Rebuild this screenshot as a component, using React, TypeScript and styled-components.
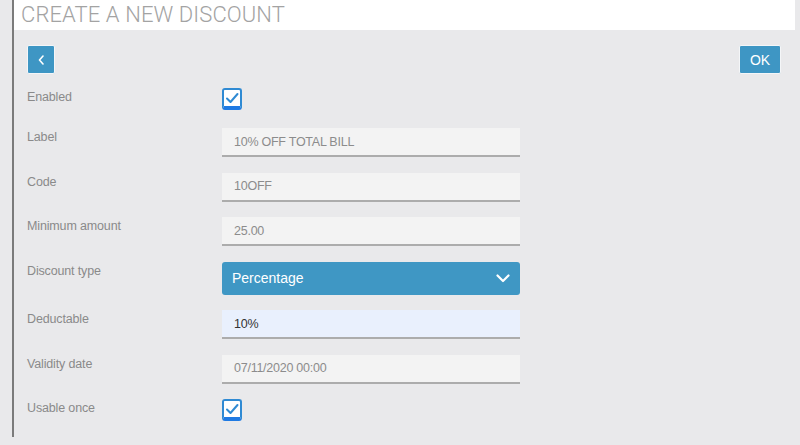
import React from "react";
import styled, { createGlobalStyle } from "styled-components";

const Global = createGlobalStyle`
  html, body { margin: 0; padding: 0; background: #e9e9eb; }
  body { font-family: "Liberation Sans", Arial, sans-serif; }
  * { box-sizing: border-box; }
`;

const Page = styled.div`
  width: 800px;
  height: 445px;
  padding-left: 12px;
  background: #e9e9eb;
  overflow: hidden;
`;

const Frame = styled.div`
  width: 783px;
  height: 437px;
  border-left: 2px solid #7b7b7b;
  display: flex;
  flex-direction: column;
`;

const Header = styled.div`
  height: 30px;
  background: #ffffff;
  padding-left: 7px;
  display: flex;
  align-items: center;
`;

const Title = styled.h1`
  margin: 0;
  font-family: Roboto, "Liberation Sans", sans-serif;
  font-weight: 300;
  font-size: 22px;
  letter-spacing: 0.1px;
  color: #a3a3a3;
  line-height: 30px;
`;

const Content = styled.div`
  padding: 15px 14px 0 13px;
  display: flex;
  flex-direction: column;
`;

const Toolbar = styled.div`
  display: flex;
  justify-content: space-between;
  align-items: center;
`;

const Button = styled.button<{ $w: number }>`
  width: ${(p) => p.$w}px;
  height: 29px;
  background: #3e96c4;
  border: 1px solid #f4f6f8;
  border-radius: 2px;
  color: #ffffff;
  font-family: "Liberation Sans", Arial, sans-serif;
  font-size: 14px;
  padding: 0;
  display: flex;
  align-items: center;
  justify-content: center;
`;

const Form = styled.div`
  margin-top: 14px;
  display: grid;
  grid-template-columns: 195px 298px;
  row-gap: 15.5px;
  align-items: start;
`;

const Label = styled.div<{ $first?: boolean }>`
  font-size: 12.5px;
  letter-spacing: -0.15px;
  line-height: 18px;
  color: #8a8a8a;
  margin-bottom: ${(p) => (p.$first ? 6.5 : 0)}px;
`;

const Field = styled.div<{ $auto?: boolean }>`
  height: 29px;
  background: ${(p) => (p.$auto ? "#e9f0fd" : "#f3f3f3")};
  border-bottom: 2px solid #acacac;
  padding-left: 12px;
  display: flex;
  align-items: center;
  font-size: 12.5px;
  letter-spacing: -0.25px;
  color: ${(p) => (p.$auto ? "#333333" : "#8c8c8c")};
`;

const Select = styled.div`
  height: 33px;
  background: #3f97c4;
  border-radius: 3px;
  padding: 0 10px 0 10px;
  display: flex;
  align-items: center;
  justify-content: space-between;
  color: #ffffff;
  font-size: 14px;
`;

const CheckBox = styled.div`
  width: 20px;
  height: 22px;
  border: 2px solid #2f8ad3;
  border-bottom-width: 4px;
  border-bottom-color: #1f7ae3;
  border-radius: 3px;
  background: #ffffff;
  display: flex;
  align-items: center;
  justify-content: center;
`;

const Check = () => (
  <CheckBox>
    <svg width="14" height="12" viewBox="0 0 14 12">
      <path d="M2 6.5 L5.5 10 L12.5 2" fill="none" stroke="#2f8ad3" strokeWidth="2" strokeLinecap="round" strokeLinejoin="round" />
    </svg>
  </CheckBox>
);

const Chevron = ({ dir }: { dir: "left" | "down" }) =>
  dir === "left" ? (
    <svg width="6" height="10" viewBox="0 0 6 10">
      <path d="M5 1 L1.5 5 L5 9" fill="none" stroke="#fff" strokeWidth="1.6" strokeLinecap="round" strokeLinejoin="round" />
    </svg>
  ) : (
    <svg width="14" height="9" viewBox="0 0 14 9">
      <path d="M1.5 1.5 L7 7 L12.5 1.5" fill="none" stroke="#fff" strokeWidth="2.2" strokeLinecap="round" strokeLinejoin="round" />
    </svg>
  );

export default function App() {
  return (
    <>
      <Global />
      <Page>
        <Frame>
          <Header>
            <Title>CREATE A NEW DISCOUNT</Title>
          </Header>
          <Content>
            <Toolbar>
              <Button $w={28}>
                <Chevron dir="left" />
              </Button>
              <Button $w={42}>OK</Button>
            </Toolbar>
            <Form>
              <Label $first>Enabled</Label>
              <Check />
              <Label>Label</Label>
              <Field>10% OFF TOTAL BILL</Field>
              <Label>Code</Label>
              <Field>10OFF</Field>
              <Label>Minimum amount</Label>
              <Field>25.00</Field>
              <Label>Discount type</Label>
              <Select>
                <span>Percentage</span>
                <Chevron dir="down" />
              </Select>
              <Label>Deductable</Label>
              <Field $auto>10%</Field>
              <Label>Validity date</Label>
              <Field>07/11/2020 00:00</Field>
              <Label>Usable once</Label>
              <Check />
            </Form>
          </Content>
        </Frame>
      </Page>
    </>
  );
}
